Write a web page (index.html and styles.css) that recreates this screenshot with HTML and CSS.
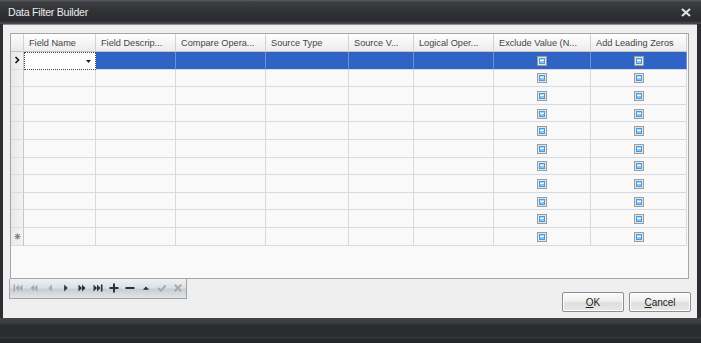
FILE: index.html
```html
<!DOCTYPE html>
<html>
  <head>
    <meta charset="utf-8">
    <title>Data Filter Builder</title>
    <link rel="stylesheet" href="styles.css">
  </head>
  <body>
    <div class="window">
      <div class="titlebar">
        <span class="title">Data Filter Builder</span>
        <svg class="close" width="10" height="9" viewBox="0 0 10 9"><path d="M1 1l8 7M9 1l-8 7" stroke="#e6e6e6" stroke-width="2"/></svg>
      </div>
      <div class="main">
        <div class="grid">
          <div class="row head">
            <div class="cell ind"></div>
            <div class="cell">Field Name</div>
            <div class="cell">Field Descrip...</div>
            <div class="cell">Compare Opera...</div>
            <div class="cell">Source Type</div>
            <div class="cell">Source V...</div>
            <div class="cell">Logical Oper...</div>
            <div class="cell">Exclude Value (N...</div>
            <div class="cell">Add Leading Zeros</div>
          </div>
          <div class="row sel">
            <div class="cell ind"><svg width="6" height="8" viewBox="0 0 6 8"><path d="M1.5 1l3 3-3 3" fill="none" stroke="#111" stroke-width="1.6"/></svg></div>
            <div class="cell edit"><svg class="drop" width="5" height="3" viewBox="0 0 5 3"><path d="M0 0h5l-2.5 3z" fill="#222"/></svg></div>
            <div class="cell"></div><div class="cell"></div><div class="cell"></div><div class="cell"></div><div class="cell"></div>
            <div class="cell mid"><span class="chk"></span></div>
            <div class="cell mid"><span class="chk"></span></div>
          </div>
          <div class="row">
            <div class="cell ind"></div><div class="cell"></div><div class="cell"></div><div class="cell"></div><div class="cell"></div><div class="cell"></div><div class="cell"></div>
            <div class="cell mid"><span class="chk"></span></div><div class="cell mid"><span class="chk"></span></div>
          </div>
          <div class="row">
            <div class="cell ind"></div><div class="cell"></div><div class="cell"></div><div class="cell"></div><div class="cell"></div><div class="cell"></div><div class="cell"></div>
            <div class="cell mid"><span class="chk"></span></div><div class="cell mid"><span class="chk"></span></div>
          </div>
          <div class="row">
            <div class="cell ind"></div><div class="cell"></div><div class="cell"></div><div class="cell"></div><div class="cell"></div><div class="cell"></div><div class="cell"></div>
            <div class="cell mid"><span class="chk"></span></div><div class="cell mid"><span class="chk"></span></div>
          </div>
          <div class="row">
            <div class="cell ind"></div><div class="cell"></div><div class="cell"></div><div class="cell"></div><div class="cell"></div><div class="cell"></div><div class="cell"></div>
            <div class="cell mid"><span class="chk"></span></div><div class="cell mid"><span class="chk"></span></div>
          </div>
          <div class="row">
            <div class="cell ind"></div><div class="cell"></div><div class="cell"></div><div class="cell"></div><div class="cell"></div><div class="cell"></div><div class="cell"></div>
            <div class="cell mid"><span class="chk"></span></div><div class="cell mid"><span class="chk"></span></div>
          </div>
          <div class="row">
            <div class="cell ind"></div><div class="cell"></div><div class="cell"></div><div class="cell"></div><div class="cell"></div><div class="cell"></div><div class="cell"></div>
            <div class="cell mid"><span class="chk"></span></div><div class="cell mid"><span class="chk"></span></div>
          </div>
          <div class="row">
            <div class="cell ind"></div><div class="cell"></div><div class="cell"></div><div class="cell"></div><div class="cell"></div><div class="cell"></div><div class="cell"></div>
            <div class="cell mid"><span class="chk"></span></div><div class="cell mid"><span class="chk"></span></div>
          </div>
          <div class="row">
            <div class="cell ind"></div><div class="cell"></div><div class="cell"></div><div class="cell"></div><div class="cell"></div><div class="cell"></div><div class="cell"></div>
            <div class="cell mid"><span class="chk"></span></div><div class="cell mid"><span class="chk"></span></div>
          </div>
          <div class="row">
            <div class="cell ind"></div><div class="cell"></div><div class="cell"></div><div class="cell"></div><div class="cell"></div><div class="cell"></div><div class="cell"></div>
            <div class="cell mid"><span class="chk"></span></div><div class="cell mid"><span class="chk"></span></div>
          </div>
          <div class="row">
            <div class="cell ind"><svg width="7" height="7" viewBox="0 0 7 7"><path d="M3.5 0.5v6M0.5 3.5h6M1.4 1.4l4.2 4.2M5.6 1.4l-4.2 4.2" stroke="#8a8a8a" stroke-width="1.2"/></svg></div>
            <div class="cell"></div><div class="cell"></div><div class="cell"></div><div class="cell"></div><div class="cell"></div><div class="cell"></div>
            <div class="cell mid"><span class="chk"></span></div><div class="cell mid"><span class="chk"></span></div>
          </div>
        </div>
        <div class="bottom">
          <div class="navigator">
            <svg class="nav off" viewBox="0 0 16 18"><path d="M3.5 5.5h1.6v7H3.5zM9 5.5v7L5.5 9zM12.5 5.5v7L9 9z"/></svg>
            <svg class="nav off" viewBox="0 0 16 18"><path d="M8 5.5v7L4.5 9zM11.5 5.5v7L8 9z"/></svg>
            <svg class="nav off" viewBox="0 0 16 18"><path d="M9.8 5.5v7L6.3 9z"/></svg>
            <svg class="nav" viewBox="0 0 16 18"><path d="M6.2 5.5v7L9.7 9z"/></svg>
            <svg class="nav" viewBox="0 0 16 18"><path d="M4.5 5.5v7L8 9zM8 5.5v7L11.5 9z"/></svg>
            <svg class="nav" viewBox="0 0 16 18"><path d="M3.5 5.5v7L7 9zM7 5.5v7L10.5 9zM10.9 5.5h1.6v7h-1.6z"/></svg>
            <svg class="nav" viewBox="0 0 16 18"><path d="M7 4.5h2v3.5h3.5v2H9v3.5H7V10H3.5V8H7z"/></svg>
            <svg class="nav" viewBox="0 0 16 18"><path d="M3.5 8h9v2h-9z"/></svg>
            <svg class="nav" viewBox="0 0 16 18"><path d="M4.8 10.8h6.4L8 7.4z"/></svg>
            <svg class="nav off" viewBox="0 0 16 18"><path d="M4.2 9l2.7 2.7 4.8-5.4" fill="none" stroke="#a6aaae" stroke-width="2"/></svg>
            <svg class="nav off" viewBox="0 0 16 18"><path d="M4.8 5.8l6.4 6.4M11.2 5.8l-6.4 6.4" fill="none" stroke="#a6aaae" stroke-width="2"/></svg>
          </div>
          <div class="buttons">
            <button type="button" class="btn"><u>O</u>K</button>
            <button type="button" class="btn"><u>C</u>ancel</button>
          </div>
        </div>
      </div>
      <div class="footer"></div>
    </div>
  </body>
</html>
```

FILE: styles.css
```css
body {
  margin: 0;
  padding: 0;
  font-family: "Liberation Sans", Arial, sans-serif;
}
.window {
  width: 701px;
  height: 343px;
  display: flex;
  flex-direction: column;
  background-color: #2c2e32;
  overflow: hidden;
}
.titlebar {
  height: 24px;
  flex: none;
  display: flex;
  align-items: center;
  justify-content: space-between;
  padding: 0 10px 0 8px;
  box-sizing: border-box;
  background: linear-gradient(#5d5f63 0, #3c3e42 2px, #2f3135 12px, #2a2c30 21px, #46484c 23px);
}
.title {
  color: #ececec;
  font-size: 10.6px;
  letter-spacing: -0.25px;
}
.close {
  display: block;
}
.main {
  height: 294px;
  flex: none;
  margin: 0 4px 0 3px;
  padding: 8px 8px 0 6px;
  box-sizing: border-box;
  background-color: #efefef;
  border-top: 1px solid #8c8e92;
}
.grid {
  margin-left: 1px;
  height: 246px;
  box-sizing: border-box;
  border: 1px solid #a6a6a6;
  background-color: #f9f9fa;
}
.row {
  display: grid;
  grid-template-columns: 13px 72px 80px 90px 83px 65px 80px 97px 96px;
  height: 17.6px;
}
.cell {
  box-sizing: border-box;
  border-right: 1px solid #d7dae5;
  border-bottom: 1px solid #d7dae5;
  font-size: 9.2px;
  color: #444;
  white-space: nowrap;
  overflow: hidden;
}
.cell.ind {
  display: flex;
  align-items: center;
  justify-content: center;
  background: linear-gradient(90deg, #e9e9e9, #f3f3f3);
  border-right: 1px solid #c6c6c6;
  border-bottom: 1px solid #dcdcdc;
}
.row.head {
  height: 18px;
}
.head .cell {
  background: linear-gradient(#ffffff, #ececec);
  border-right: 1px solid #d2d2d2;
  border-bottom: 1px solid #c4c4c4;
  padding: 4px 0 0 5px;
}
.head .cell.ind {
  padding: 0;
  background: linear-gradient(#fbfbfb, #eaeaea);
}
.sel .cell {
  background-color: #2f64c6;
  border-right-color: #6c90d6;
}
.sel .cell.ind {
  background: linear-gradient(90deg, #e9e9e9, #f3f3f3);
  border-right-color: #c6c6c6;
}
.sel .cell.edit {
  position: relative;
  background-color: #ffffff;
  border: 1px dotted #444;
}
.drop {
  position: absolute;
  right: 4px;
  top: 7px;
}
.cell.mid {
  display: flex;
  align-items: center;
  justify-content: center;
}
.chk {
  width: 10px;
  height: 10px;
  box-sizing: border-box;
  border: 1px solid #9c9c9c;
  background-color: #e4e4e4;
  padding: 1px;
  margin-top: 1px;
}
.chk::after {
  content: "";
  display: block;
  width: 6px;
  height: 6px;
  box-sizing: border-box;
  border: 1px solid #4b9be0;
  background: linear-gradient(#a7dbfb 0, #a7dbfb 35%, #f2faff 35%, #f2faff 60%, #86c8f3 60%);
}
.bottom {
  display: flex;
  justify-content: space-between;
  align-items: flex-start;
}
.navigator {
  display: flex;
  height: 20px;
  box-sizing: border-box;
  border: 1px solid #a2a2a2;
  border-top: none;
  background: linear-gradient(#eef1f3 0, #dde1e5 45%, #c9ced3 55%, #e2e5e8 100%);
}
.nav {
  width: 16px;
  height: 18px;
  fill: #2e3236;
}
.nav.off {
  fill: #a6aaae;
}
.buttons {
  display: flex;
  gap: 5px;
  margin-top: 13px;
  margin-right: -2px;
}
.btn {
  width: 62px;
  height: 20px;
  padding: 0;
  font-family: "Liberation Sans", Arial, sans-serif;
  font-size: 10px;
  color: #222;
  border: 1px solid #8e8e8e;
  border-radius: 2px;
  background: linear-gradient(#fbfbfb 0, #f0f0f0 45%, #dedede 55%, #e8e8e8 100%);
  box-shadow: inset 0 0 0 1px #fdfdfd;
}
.footer {
  flex: 1;
  background: linear-gradient(#43454a 0, #36383c 6px, #2a2c30 7px, #2b2d31 19px, #3a3c40 20px, #25272b 21px);
}
```
